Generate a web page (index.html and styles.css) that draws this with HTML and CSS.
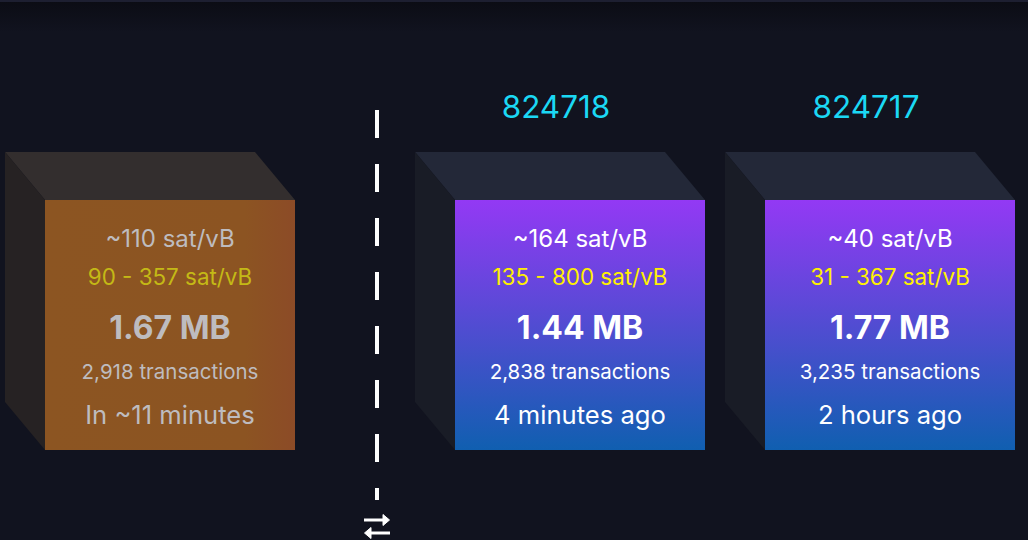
FILE: index.html
```html
<!DOCTYPE html>
<html lang="en">
<head>
  <meta charset="UTF-8">
  <title>Blocks</title>
  <link rel="stylesheet" href="styles.css">
</head>
<body>
  <div class="top-bar"></div>
  <div class="blockchain">
    <div class="block pending">
      <div class="height"></div>
      <div class="cube">
        <div class="face">
          <div class="median">~110 sat/vB</div>
          <div class="range">90 - 357 sat/vB</div>
          <div class="size">1.67 MB</div>
          <div class="txs">2,918 transactions</div>
          <div class="time">In ~11 minutes</div>
        </div>
      </div>
    </div>

    <div class="divider">
      <div class="dashes"></div>
      <svg class="swap" width="26" height="26" viewBox="0 0 26 26">
        <path d="M0 7h19" stroke="#fff" stroke-width="3"/>
        <path d="M19 1.500l6.500 5.500-6.500 5.500z" fill="#fff" stroke="#fff" stroke-width="1" stroke-linejoin="round"/>
        <path d="M26 20H7" stroke="#fff" stroke-width="3"/>
        <path d="M7 14.500L.5 20l6.500 5.500z" fill="#fff" stroke="#fff" stroke-width="1" stroke-linejoin="round"/>
      </svg>
    </div>

    <div class="block">
      <div class="height">824718</div>
      <div class="cube">
        <div class="face">
          <div class="median">~164 sat/vB</div>
          <div class="range">135 - 800 sat/vB</div>
          <div class="size">1.44 MB</div>
          <div class="txs">2,838 transactions</div>
          <div class="time">4 minutes ago</div>
        </div>
      </div>
    </div>

    <div class="block">
      <div class="height">824717</div>
      <div class="cube">
        <div class="face">
          <div class="median">~40 sat/vB</div>
          <div class="range">31 - 367 sat/vB</div>
          <div class="size">1.77 MB</div>
          <div class="txs">3,235 transactions</div>
          <div class="time">2 hours ago</div>
        </div>
      </div>
    </div>
  </div>
</body>
</html>
```

FILE: styles.css
```css
html, body {
  height: 100%;
}

body {
  margin: 0;
  overflow: hidden;
  background: linear-gradient(#0b0c14, #11131f 32px);
  color: #fff;
  font-family: Inter, "Liberation Sans", sans-serif;
}

.top-bar {
  height: 2px;
  background-color: #1d1f31;
}

.blockchain {
  display: flex;
  align-items: flex-start;
  padding: 84px 0 0 5px;
}

.block {
  width: 290px;
  margin-right: 20px;
}

.block.pending {
  margin-right: 0;
}

.height {
  height: 66px;
  box-sizing: border-box;
  padding: 4px 8px 0 0;
  text-align: center;
  font-size: 31.500px;
  line-height: 34px;
  color: #1bd8f4;
}

.cube {
  position: relative;
  padding: 48px 0 0 40px;
}

.cube::before,
.cube::after {
  content: "";
  position: absolute;
  top: 0;
  left: 0;
}

.cube::before {
  width: 290px;
  height: 48px;
  background-color: #232838;
  clip-path: polygon(0 0, 250px 0, 100% 100%, 40px 100%);
}

.cube::after {
  width: 40px;
  height: 298px;
  background-color: #191c26;
  clip-path: polygon(0 0, 100% 48px, 100% 100%, 0 250px);
}

.face {
  width: 250px;
  height: 250px;
  box-sizing: border-box;
  padding-top: 22px;
  text-align: center;
  background: linear-gradient(#9339f4, #105fb0);
}

.median {
  font-size: 24px;
  line-height: 34px;
}

.range {
  font-size: 22.400px;
  line-height: 34px;
  margin-top: 4px;
  margin-bottom: 14px;
  color: #fff000;
}

.size {
  font-size: 32px;
  font-weight: 700;
  line-height: 40px;
}

.txs {
  font-size: 20.500px;
  line-height: 30px;
  margin-top: 9px;
}

.time {
  font-size: 25.600px;
  line-height: 34px;
  margin-top: 11px;
}

/* pending block is dimmed and orange */
.pending .cube::before {
  background-color: #332e2e;
}

.pending .cube::after {
  background-color: #262223;
}

.pending .face {
  background: linear-gradient(to right, #8c5522 0%, #8c5422 80%, #8c4b27 100%);
  color: #bebcbf;
}

.pending .range {
  color: #c4b916;
}

.divider {
  display: flex;
  flex-direction: column;
  align-items: center;
  width: 26px;
  margin: 24px 25px 0 69px;
}

.dashes {
  width: 4px;
  height: 390px;
  background: repeating-linear-gradient(#fff 0, #fff 28px, transparent 28px, transparent 54px);
}

.swap {
  margin-top: 13px;
  flex-shrink: 0;
}
```
